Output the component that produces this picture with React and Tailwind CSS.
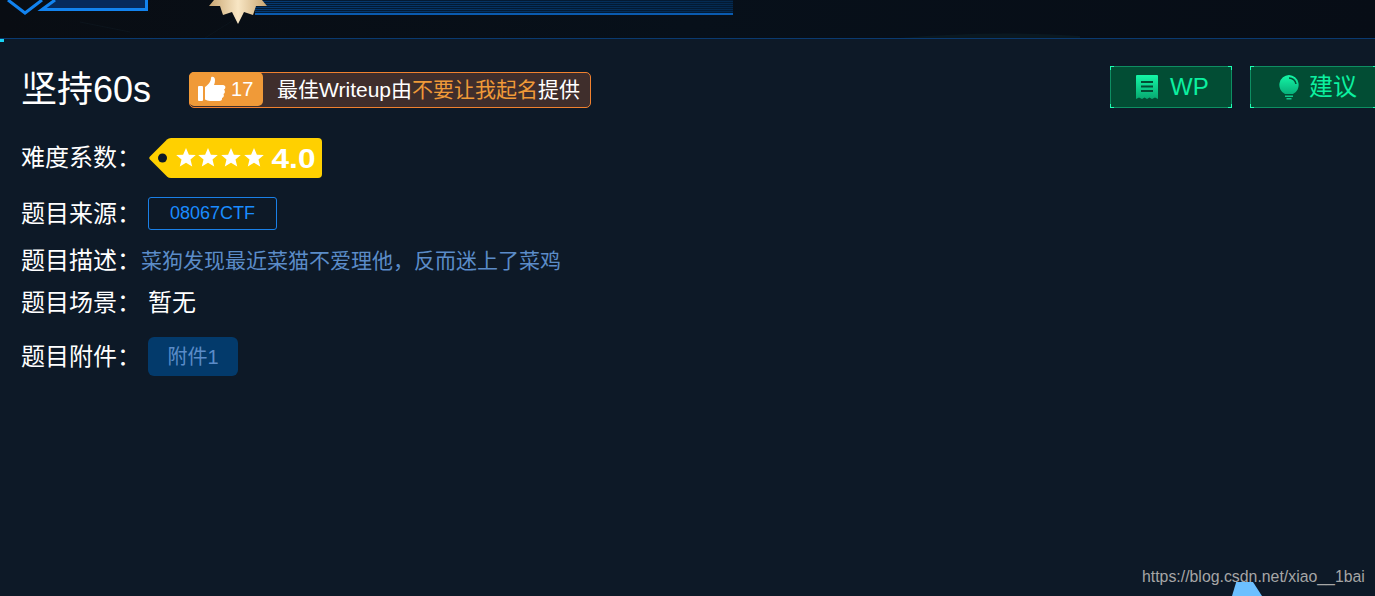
const sans = "font-['Liberation_Sans','Noto_Sans_CJK_SC',sans-serif]";

function Banner() {
  const stripes = [0, 2, 4, 6, 8, 10, 12];
  return (
    <svg width="1375" height="38" viewBox="0 0 1375 38" className="block">
      <defs>
        <linearGradient id="sky" x1="0" y1="0" x2="1" y2="0">
          <stop offset="0" stopColor="#090d13" />
          <stop offset="0.5" stopColor="#07101a" />
          <stop offset="1" stopColor="#070d16" />
        </linearGradient>
        <linearGradient id="bar" x1="0" y1="0" x2="1" y2="0">
          <stop offset="0" stopColor="#053a72" />
          <stop offset="1" stopColor="#042a50" />
        </linearGradient>
        <linearGradient id="medal" x1="0" y1="0" x2="1" y2="0">
          <stop offset="0" stopColor="#c9a672" />
          <stop offset="0.5" stopColor="#f8e6c4" />
          <stop offset="1" stopColor="#c9a672" />
        </linearGradient>
      </defs>
      <rect width="1375" height="38" fill="url(#sky)" />
      <path d="M900 38 Q990 30 1080 36 L1080 38 Z" fill="#0a1820" />
      <path d="M80 22 L130 32 M205 38 L240 16" stroke="#0c141c" fill="none" />
      <rect x="255" y="0" width="478" height="13" fill="url(#bar)" />
      {stripes.map((y) => (
        <rect key={y} x="255" y={y} width="478" height="1" fill="#031a33" />
      ))}
      <rect x="255" y="13" width="478" height="2" fill="#0a5bb0" />
      <path d="M55 0 L42 9.500 H146.500 V0 H56 Z" fill="#062a5c" />
      <path d="M8 0 L25 13 L42 0" fill="none" stroke="#1283ef" strokeWidth="3" />
      <path d="M55 0 L42 9.500 H146.500 V0" fill="none" stroke="#1283ef" strokeWidth="3" />
      <path
        d="M214 0 L209 6 L220 6 L223 15 L232 12 L238 24 L244 12 L253 15 L256 6 L267 6 L262 0 Z"
        fill="url(#medal)"
      />
    </svg>
  );
}

function Row({ label, className = "", children }) {
  return (
    <div className={`flex items-center ${className}`}>
      <span className="w-[127px] shrink-0 text-[24px] leading-[32px] text-white">{label}：</span>
      {children}
    </div>
  );
}

function Btn({ icon, text, className = "" }) {
  const corner = "absolute h-[4px] w-[4px] border-[#1dffb4]";
  return (
    <button className={`relative flex h-[42px] items-center border border-[#0e8e62] bg-[#024d34] text-[24px] text-[#0cf0a0] ${className}`}>
      <span className={`${corner} left-[-1px] top-[-1px] border-l border-t`} />
      <span className={`${corner} right-[-1px] top-[-1px] border-r border-t`} />
      <span className={`${corner} left-[-1px] bottom-[-1px] border-l border-b`} />
      <span className={`${corner} right-[-1px] bottom-[-1px] border-r border-b`} />
      {icon}
      <span>{text}</span>
    </button>
  );
}

export default function App() {
  return (
    <div className={`relative h-[596px] w-[1375px] overflow-hidden bg-[#0d1927] ${sans}`}>
      <Banner />
      <div className="relative h-[1px] bg-[#0a3a70]">
        <span className="absolute left-0 top-[1px] h-[3px] w-[4px] bg-[#19d4f5]" />
      </div>

      <div className="flex flex-col pl-[21px]">
        <div className="mt-[29px] flex h-[44px] items-center">
          <h1 className="text-[36px] leading-[44px] font-normal text-white">坚持60s</h1>
          <div className="ml-[38px] flex h-[36px] w-[402px] items-stretch rounded-[5px] border border-[#f0812f] bg-[#3f2e2c]">
            <div className="-my-[1px] -ml-[1px] mb-[1px] flex w-[74px] items-center rounded-[5px] bg-[#f09a38] pl-[9px]">
              <svg width="28" height="26" viewBox="0 0 28 26" fill="#fff">
                <rect x="0" y="10" width="5" height="15" rx="1" />
                <path d="M7 11 C10 9 13 6 13 2 C13 0 17 0 17 4 C17 6 16.500 8 16 9 H25 C28 9 28 13 26 13.500 C27.500 15 27 17.500 25.500 18 C26.500 19.500 25.500 21.500 24 22 C24.500 24 23 25 21.500 25 H12 C10 25 8.500 24 7 23.500 Z" />
              </svg>
              <span className="ml-[5px] text-[20px] text-white">17</span>
            </div>
            <div className="ml-[14px] flex items-center text-[21px] leading-[34px] whitespace-nowrap text-white">
              最佳Writeup由<span className="text-[#f09a38]">不要让我起名</span>提供
            </div>
          </div>
          <div className="mb-[6px] ml-auto flex gap-[18px]">
            <Btn
              className="w-[122px] gap-[11px] pl-[24px]"
              text="WP"
              icon={
                <svg width="24" height="26" viewBox="0 0 24 26">
                  <defs>
                    <linearGradient id="g1" x1="0" y1="0" x2="0" y2="1">
                      <stop offset="0" stopColor="#14f7a6" />
                      <stop offset="1" stopColor="#07a870" />
                    </linearGradient>
                  </defs>
                  <path d="M1 2 Q1 1 2 1 H22 Q23 1 23 2 V25 L20 23.500 L17 25 L14.500 23.500 L12 25 L9.500 23.500 L7 25 L4 23.500 L1 25 Z" fill="url(#g1)" />
                  <path d="M6 8 H18 M6 12.500 H18 M6 17 H18" stroke="#024d34" strokeWidth="1.800" />
                </svg>
              }
            />
            <Btn
              className="mr-[-2px] w-[127px] gap-[9px] pl-[27px]"
              text="建议"
              icon={
                <svg width="22" height="26" viewBox="0 0 22 26">
                  <defs>
                    <linearGradient id="g2" x1="0" y1="0" x2="0" y2="1">
                      <stop offset="0" stopColor="#14f7a6" />
                      <stop offset="1" stopColor="#07b07a" />
                    </linearGradient>
                  </defs>
                  <path d="M11 1 A10 10 0 0 1 15 20 H7 A10 10 0 0 1 11 1 Z" fill="url(#g2)" />
                  <path d="M11 4 A7 7 0 0 1 18 10" stroke="#024d34" strokeWidth="1.500" fill="none" />
                  <rect x="7" y="21.500" width="8" height="1.500" fill="#10c98c" />
                  <rect x="8.500" y="24" width="5" height="1.500" fill="#10c98c" />
                </svg>
              }
            />
          </div>
        </div>

        <Row label="难度系数" className="mt-[26px]">
          <div className="flex h-[40px] items-center">
            <svg width="175" height="40" viewBox="0 0 175 40" className="block">
              <path d="M2 18.500 L19 1.500 Q20.500 0 23 0 H170 Q174 0 174 4 V36 Q174 40 170 40 H23 Q20.500 40 19 38.500 L2 21.500 Q0.500 20 2 18.500 Z" fill="#ffd000" />
              <circle cx="14.500" cy="20" r="4.500" fill="#0d1927" />
              {[38, 60, 83, 106].map((x) => (
                <path
                  key={x}
                  transform={`translate(${x} 20)`}
                  d="M0 -10 L2.900 -3.300 L9.800 -3 L4.500 1.600 L6.200 8.500 L0 4.800 L-6.200 8.500 L-4.500 1.600 L-9.800 -3 L-2.900 -3.300 Z"
                  fill="#fff"
                />
              ))}
              <text x="123.500" y="30" fontSize="28" fontWeight="700" fill="#fff" fontFamily="Liberation Sans" textLength="44" lengthAdjust="spacingAndGlyphs">4.0</text>
            </svg>
          </div>
        </Row>

        <Row label="题目来源" className="mt-[19px]">
          <span className="flex h-[33px] w-[129px] items-center justify-center rounded-[3px] border border-[#1a80e8] text-[18px] text-[#1a8cff]">08067CTF</span>
        </Row>

        <Row label="题目描述" className="mt-[15px]">
          <span className="ml-[-7px] text-[21px] leading-[32px] whitespace-nowrap text-[#5b8cc8]">菜狗发现最近菜猫不爱理他，反而迷上了菜鸡</span>
        </Row>

        <Row label="题目场景" className="mt-[10px]">
          <span className="text-[24px] leading-[32px] text-white">暂无</span>
        </Row>

        <Row label="题目附件" className="mt-[18px]">
          <span className="flex h-[39px] w-[90px] items-center justify-center rounded-[6px] bg-[#033a6b] text-[20px] text-[#5b8cc8]">附件1</span>
        </Row>
      </div>

      <div className="absolute bottom-0 left-[1232px] h-[14px] w-[30px] bg-[#6cc0ff] [clip-path:polygon(14%_0,70%_0,100%_100%,0_100%)]" />
      <span className="absolute left-[1142px] top-[567px] text-[15.850px] leading-[20px] text-[#a6a6a6]">https://blog.csdn.net/xiao__1bai</span>
    </div>
  );
}
